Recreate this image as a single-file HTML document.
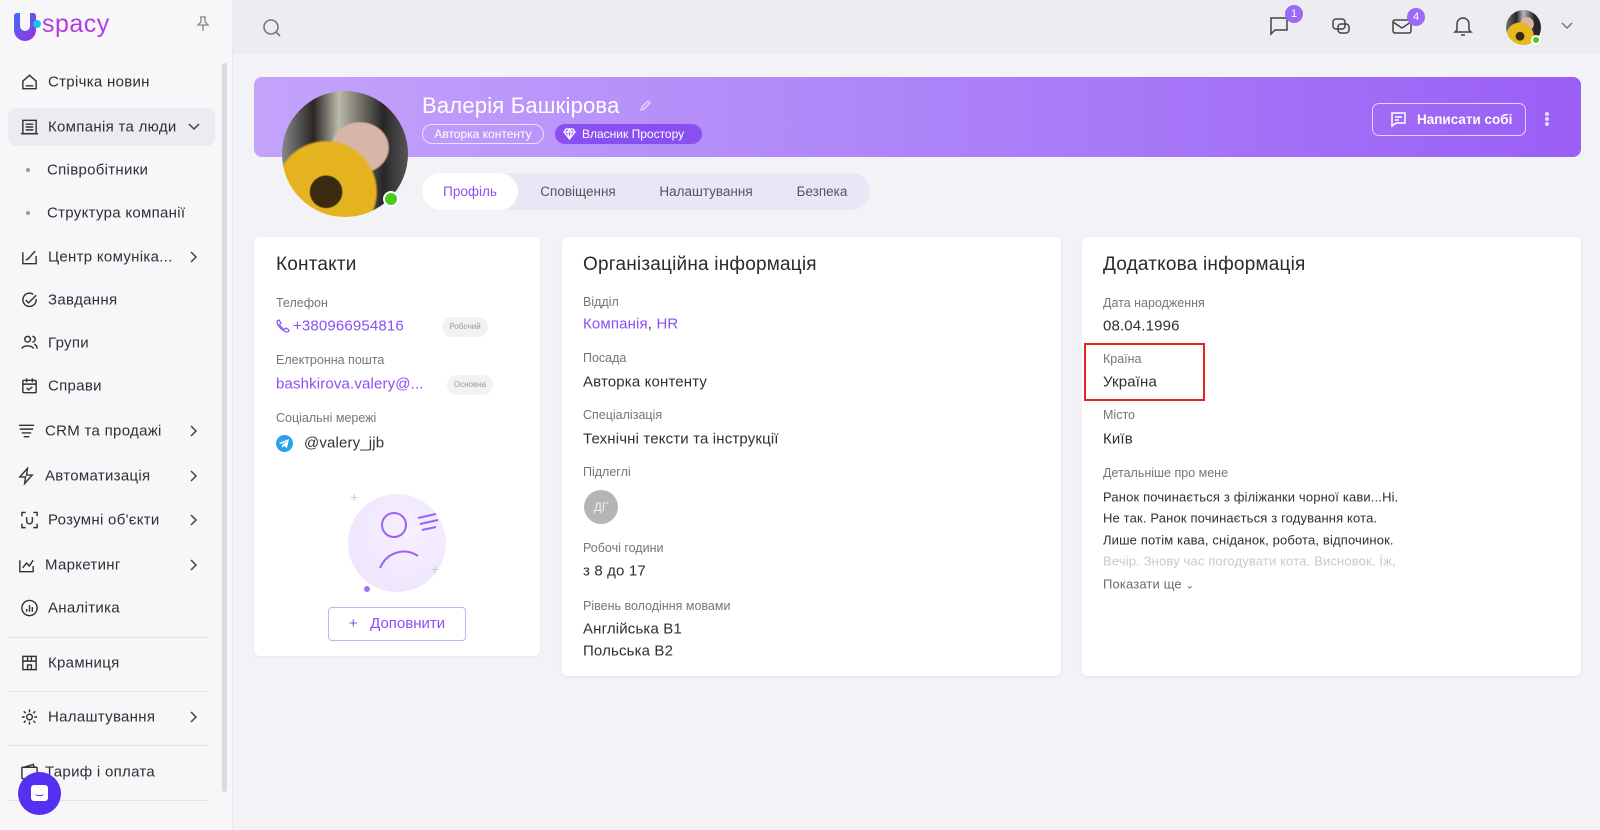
<!DOCTYPE html>
<html><head><meta charset="utf-8"><style>
*{box-sizing:border-box;margin:0;padding:0}
body{width:1600px;height:830px;overflow:hidden;background:#f3f3f7;font-family:"Liberation Sans","Noto Sans CJK SC",sans-serif;color:#2e2e33;position:relative}
.a{position:absolute}
.side{left:0;top:0;width:233px;height:830px;background:#f7f7f9;border-right:1px solid #e8e8ee}
.nav{position:absolute;left:48px;font-size:15px;color:#2f2f35;letter-spacing:.3px;transform:translateY(-50%)}
.ic{position:absolute;left:20px;width:19px;height:19px;transform:translateY(-50%)}
.chev{position:absolute;left:188px;transform:translateY(-50%)}
.div{position:absolute;left:8px;width:201px;height:1px;background:#e3e3e8}
.top{left:233px;top:0;width:1367px;height:54px;background:#ececf1}
.card{background:#fff;border-radius:6px;box-shadow:0 1px 3px rgba(0,0,0,.05)}
.t{position:absolute;font-size:19px;color:#2a2a2f;letter-spacing:.2px}
.l{position:absolute;font-size:12.5px;color:#75757c;transform:translateY(-50%)}
.v{position:absolute;font-size:15px;color:#2f2f35;transform:translateY(-50%);white-space:nowrap;letter-spacing:.15px}
.p{color:#8a4ff7}
.badge{position:absolute;width:18px;height:18px;border-radius:50%;background:#9b6af6;color:#fff;font-size:11px;text-align:center;line-height:18px}
</style></head><body>

<div class="a side">
  <div class="a" style="left:14px;top:13px;width:22px;height:28px;border-radius:3px 3px 12px 12px;background:linear-gradient(135deg,#3a6ff5,#a12ee0)"></div>
  <div class="a" style="left:20px;top:13px;width:10px;height:18px;border-radius:0 0 5px 5px;background:#f7f7f9"></div>
  <div class="a" style="left:33px;top:20px;width:8px;height:8px;border-radius:50%;background:#20c0f0"></div>
  <div class="a" style="left:42px;top:10px;font-size:25px;color:#b33be4;letter-spacing:.5px">spacy</div>
  <svg class="a" style="left:196px;top:16px" width="14" height="16" viewBox="0 0 14 16" fill="none" stroke="#888" stroke-width="1.3"><path d="M4 1h6M5 1v5L2 9h10L9 6V1M7 9v6"/></svg>
  <div class="a" style="left:222px;top:63px;width:5px;height:729px;background:#d9d9de;border-radius:3px"></div>
  <div class="a" style="left:8px;top:108px;width:207px;height:38px;background:#ebebf0;border-radius:8px"></div>

  <svg class="ic" style="top:82px" viewBox="0 0 20 20" fill="none" stroke="#333" stroke-width="1.5"><path d="M3 9l7-6 7 6v8H3z M6 14h8"/></svg>
  <div class="nav" style="top:82px">Стрічка новин</div>
  <svg class="ic" style="top:127px" viewBox="0 0 20 20" fill="none" stroke="#333" stroke-width="1.5"><rect x="3" y="3" width="14" height="14"/><path d="M6 7h8M6 10h8M6 13h8M1 17h18"/></svg>
  <div class="nav" style="top:127px">Компанія та люди</div>
  <svg class="chev" style="top:127px" width="12" height="8" viewBox="0 0 12 8" fill="none" stroke="#444" stroke-width="1.5"><path d="M1 1l5 5 5-5"/></svg>
  <div class="a" style="left:26px;top:168px;width:4px;height:4px;border-radius:50%;background:#999"></div>
  <div class="nav" style="top:170px;left:47px">Співробітники</div>
  <div class="a" style="left:26px;top:211px;width:4px;height:4px;border-radius:50%;background:#999"></div>
  <div class="nav" style="top:213px;left:47px">Структура компанії</div>
  <svg class="ic" style="top:257px" viewBox="0 0 20 20" fill="none" stroke="#333" stroke-width="1.5"><path d="M3 5v12h14V9M6 13c3 0 4-3 7-6l3-3"/></svg>
  <div class="nav" style="top:257px">Центр комуніка...</div>
  <svg class="chev" style="top:257px;left:190px" width="8" height="12" viewBox="0 0 8 12" fill="none" stroke="#444" stroke-width="1.5"><path d="M1 1l5 5-5 5"/></svg>
  <svg class="ic" style="top:300px" viewBox="0 0 20 20" fill="none" stroke="#333" stroke-width="1.5"><path d="M17 9a7 7 0 1 1-3-5M6 10l3 3 8-8"/></svg>
  <div class="nav" style="top:300px">Завдання</div>
  <svg class="ic" style="top:343px" viewBox="0 0 20 20" fill="none" stroke="#333" stroke-width="1.5"><circle cx="8" cy="6" r="3"/><path d="M2 16c1-4 11-4 12 0M13 3a3 3 0 0 1 0 6M15 11c2 1 3 3 3 5"/></svg>
  <div class="nav" style="top:343px">Групи</div>
  <svg class="ic" style="top:386px" viewBox="0 0 20 20" fill="none" stroke="#333" stroke-width="1.5"><rect x="3" y="4" width="14" height="13" rx="1"/><path d="M3 8h14M7 2v4M13 2v4M7 12l2 2 4-3"/></svg>
  <div class="nav" style="top:386px">Справи</div>
  <svg class="ic" style="top:431px;left:17px" viewBox="0 0 20 20" fill="none" stroke="#333" stroke-width="1.5"><path d="M2 4h16M3 8h14M5 12h10M7 16h6"/></svg>
  <div class="nav" style="top:431px;left:45px">CRM та продажі</div>
  <svg class="chev" style="top:431px;left:190px" width="8" height="12" viewBox="0 0 8 12" fill="none" stroke="#444" stroke-width="1.5"><path d="M1 1l5 5-5 5"/></svg>
  <svg class="ic" style="top:476px;left:17px" viewBox="0 0 20 20" fill="none" stroke="#333" stroke-width="1.5"><path d="M11 2L3 11h6l-1 7 8-9h-6z"/></svg>
  <div class="nav" style="top:476px;left:45px">Автоматизація</div>
  <svg class="chev" style="top:476px;left:190px" width="8" height="12" viewBox="0 0 8 12" fill="none" stroke="#444" stroke-width="1.5"><path d="M1 1l5 5-5 5"/></svg>
  <svg class="ic" style="top:520px" viewBox="0 0 20 20" fill="none" stroke="#333" stroke-width="1.5"><path d="M2 6V2h4M14 2h4v4M18 14v4h-4M6 18H2v-4M7 7v4a3 3 0 0 0 6 0V7"/></svg>
  <div class="nav" style="top:520px">Розумні об'єкти</div>
  <svg class="chev" style="top:520px;left:190px" width="8" height="12" viewBox="0 0 8 12" fill="none" stroke="#444" stroke-width="1.5"><path d="M1 1l5 5-5 5"/></svg>
  <svg class="ic" style="top:565px;left:17px" viewBox="0 0 20 20" fill="none" stroke="#333" stroke-width="1.5"><path d="M3 5v12h14V11M6 13l4-5 3 3 4-6"/></svg>
  <div class="nav" style="top:565px;left:45px">Маркетинг</div>
  <svg class="chev" style="top:565px;left:190px" width="8" height="12" viewBox="0 0 8 12" fill="none" stroke="#444" stroke-width="1.5"><path d="M1 1l5 5-5 5"/></svg>
  <svg class="ic" style="top:608px" viewBox="0 0 20 20" fill="none" stroke="#333" stroke-width="1.5"><circle cx="10" cy="10" r="8"/><path d="M7 14v-3M10 14V7M13 14v-5"/></svg>
  <div class="nav" style="top:608px">Аналітика</div>
  <div class="div" style="top:637px"></div>
  <svg class="ic" style="top:663px" viewBox="0 0 20 20" fill="none" stroke="#333" stroke-width="1.5"><rect x="3" y="3" width="14" height="14"/><path d="M3 8h14M8 17v-5h4v5M8 3v5M12 3v5"/></svg>
  <div class="nav" style="top:663px">Крамниця</div>
  <div class="div" style="top:691px"></div>
  <svg class="ic" style="top:717px" viewBox="0 0 20 20" fill="none" stroke="#333" stroke-width="1.5"><circle cx="10" cy="10" r="3"/><path d="M10 2v3M10 15v3M2 10h3M15 10h3M4 4l2 2M14 14l2 2M4 16l2-2M14 6l2-2"/></svg>
  <div class="nav" style="top:717px">Налаштування</div>
  <svg class="chev" style="top:717px;left:190px" width="8" height="12" viewBox="0 0 8 12" fill="none" stroke="#444" stroke-width="1.5"><path d="M1 1l5 5-5 5"/></svg>
  <div class="div" style="top:745px"></div>
  <svg class="ic" style="top:772px" viewBox="0 0 20 20" fill="none" stroke="#333" stroke-width="1.5"><rect x="2" y="5" width="16" height="12" rx="1"/><path d="M4 5l10-3 1 3"/></svg>
  <div class="nav" style="top:772px;left:45px">Тариф і оплата</div>
  <div class="div" style="top:800px"></div>
  <div class="a" style="left:18px;top:772px;width:43px;height:43px;border-radius:50%;background:#5530f0"></div>
  <div class="a" style="left:31px;top:785px;width:17px;height:16px;border-radius:3px;background:#fff"></div>
  <div class="a" style="left:35px;top:793px;width:9px;height:3px;border-bottom:1.5px solid #5530f0;border-radius:0 0 5px 5px"></div>
</div>

<div class="a top"></div>
<svg class="a" style="left:262px;top:18px" width="20" height="20" viewBox="0 0 20 20" fill="none" stroke="#777" stroke-width="1.6"><circle cx="9" cy="9" r="7"/><path d="M14 14l4 4"/></svg>
<svg class="a" style="left:1269px;top:16px" width="20" height="20" viewBox="0 0 20 20" fill="none" stroke="#444" stroke-width="1.5"><path d="M2 2h16v12H6l-4 4z"/></svg>
<div class="badge" style="left:1285px;top:5px">1</div>
<svg class="a" style="left:1331px;top:17px" width="20" height="20" viewBox="0 0 20 20" fill="none" stroke="#444" stroke-width="1.5"><rect x="2" y="2" width="12" height="10" rx="3"/><rect x="7" y="7" width="11" height="9" rx="3"/></svg>
<svg class="a" style="left:1392px;top:18px" width="20" height="18" viewBox="0 0 20 18" fill="none" stroke="#444" stroke-width="1.5"><rect x="1" y="2" width="18" height="13" rx="2"/><path d="M1 4l9 6 9-6"/></svg>
<div class="badge" style="left:1407px;top:8px">4</div>
<svg class="a" style="left:1453px;top:15px" width="20" height="22" viewBox="0 0 20 22" fill="none" stroke="#444" stroke-width="1.5"><path d="M4 15V9a6 6 0 0 1 12 0v6l2 2H2zM8 20h4"/></svg>
<div class="a" style="left:1506px;top:10px;width:35px;height:35px;border-radius:50%;background:radial-gradient(circle at 40% 75%,#3a2a10 0 12%,#e9b820 14% 40%,transparent 42%),radial-gradient(ellipse at 60% 40%,#d7b6a8 0 22%,transparent 24%),linear-gradient(90deg,#777,#2a2626 30%,#bbb 50%,#2a2626 80%)"></div>
<div class="a" style="left:1531px;top:35px;width:10px;height:10px;border-radius:50%;background:#4cc91d;border:2px solid #fff"></div>
<svg class="a" style="left:1561px;top:22px" width="12" height="8" viewBox="0 0 12 8" fill="none" stroke="#777" stroke-width="1.5"><path d="M1 1l5 5 5-5"/></svg>

<div class="a" style="left:254px;top:77px;width:1327px;height:80px;border-radius:8px;background:linear-gradient(90deg,#c4a3fb,#ad84f8 50%,#9a5ff6)"></div>
<div class="a" style="left:282px;top:91px;width:126px;height:126px;border-radius:50%;background:radial-gradient(circle at 35% 80%,#3a2a10 0 12%,#e5b31f 13% 38%,transparent 40%),radial-gradient(ellipse at 62% 45%,#d7b6a8 0 25%,transparent 27%),linear-gradient(90deg,#888 0,#2a2626 25%,#bba 45%,#2a2626 80%,#555)"></div>
<div class="a" style="left:383px;top:191px;width:16px;height:16px;border-radius:50%;background:#4cc91d;border:2px solid #fff"></div>
<div class="a" style="left:422px;top:93px;font-size:22px;color:#fff;letter-spacing:.2px">Валерія Башкірова</div>
<svg class="a" style="left:639px;top:100px" width="12" height="12" viewBox="0 0 12 12" fill="none" stroke="#e6d8ff" stroke-width="1.3"><path d="M2 10l1-3 6-6 2 2-6 6z"/></svg>
<div class="a" style="left:422px;top:124px;width:122px;height:20px;border:1px solid #ecdfff;border-radius:10px;color:#fff;font-size:12px;text-align:center;line-height:18px">Авторка контенту</div>
<div class="a" style="left:555px;top:124px;width:147px;height:20px;background:#8a4ff1;border-radius:10px;color:#fff;font-size:12px;line-height:20px;padding-left:27px">Власник Простору</div>
<svg class="a" style="left:563px;top:128px" width="13" height="12" viewBox="0 0 13 12" fill="none" stroke="#fff" stroke-width="1.3"><path d="M1 4l2-3h7l2 3-5.5 7zM1 4h11M6.5 11L4.5 4 6.5 1 8.5 4z"/></svg>
<div class="a" style="left:1372px;top:103px;width:154px;height:33px;border:1px solid #e2d2ff;border-radius:7px;color:#fff;font-size:13.5px;font-weight:bold;line-height:31px;padding-left:44px">Написати собі</div>
<svg class="a" style="left:1390px;top:111px" width="17" height="17" viewBox="0 0 17 17" fill="none" stroke="#fff" stroke-width="1.5"><path d="M2 2h13v10H6l-4 3zM5 6h7M5 9h4"/></svg>
<div class="a" style="left:1545px;top:112px;width:4px;height:4px;border-radius:50%;background:#e8dcff;box-shadow:0 5px 0 #e8dcff,0 10px 0 #e8dcff"></div>

<div class="a" style="left:422px;top:173px;width:448px;height:37px;border-radius:19px;background:#ebe6f6"></div>
<div class="a" style="left:422px;top:173px;width:96px;height:37px;border-radius:19px;background:#fff"></div>
<div class="a" style="left:422px;top:184px;width:96px;text-align:center;font-size:13.5px;color:#8a4ff7">Профіль</div>
<div class="a" style="left:528px;top:184px;width:100px;text-align:center;font-size:13.5px;color:#555">Сповіщення</div>
<div class="a" style="left:646px;top:184px;width:120px;text-align:center;font-size:13.5px;color:#555">Налаштування</div>
<div class="a" style="left:782px;top:184px;width:80px;text-align:center;font-size:13.5px;color:#555">Безпека</div>

<div class="a card" style="left:254px;top:237px;width:286px;height:419px">
  <div class="t" style="left:22px;top:17px">Контакти</div>
  <div class="l" style="left:22px;top:66px">Телефон</div>
  <svg class="a" style="left:22px;top:82px" width="14" height="14" viewBox="0 0 14 14" fill="none" stroke="#8a4ff7" stroke-width="1.2"><path d="M3 1l2 3-1.5 1.5c1 2 3 4 5 5L10 9l3 2-1 2C7 13 1 7 1 2z"/></svg>
  <div class="v p" style="left:39px;top:89px">+380966954816</div>
  <div class="a" style="left:188px;top:80px;width:46px;height:20px;border-radius:10px;background:#f2f2f5;font-size:8px;color:#999;text-align:center;line-height:20px">Робочий</div>
  <div class="l" style="left:22px;top:123px">Електронна пошта</div>
  <div class="v p" style="left:22px;top:147px">bashkirova.valery@...</div>
  <div class="a" style="left:193px;top:138px;width:46px;height:20px;border-radius:10px;background:#f2f2f5;font-size:8px;color:#999;text-align:center;line-height:20px">Основна</div>
  <div class="l" style="left:22px;top:181px">Соціальні мережі</div>
  <div class="a" style="left:22px;top:198px;width:17px;height:17px;border-radius:50%;background:#2aa3ea"></div>
  <svg class="a" style="left:25px;top:202px" width="11" height="9" viewBox="0 0 11 9" fill="#fff"><path d="M0 4l10-4-2 9-3-2-2 2V6l5-4-6 3z"/></svg>
  <div class="v" style="left:50px;top:206px;color:#333">@valery_jjb</div>
  <div class="a" style="left:94px;top:257px;width:98px;height:98px;border-radius:50%;background:radial-gradient(circle at 60% 40%,#f6f0ff,#ede2fd)"></div>
  <div class="a" style="left:96px;top:252px;color:#ccc;font-size:14px">+</div>
  <div class="a" style="left:177px;top:324px;color:#ccc;font-size:14px">+</div>
  <div class="a" style="left:110px;top:349px;width:6px;height:6px;border-radius:50%;background:#a574f5"></div>
  <svg class="a" style="left:118px;top:275px" width="80" height="65" viewBox="0 0 80 65" fill="none" stroke="#9a63f5" stroke-width="2"><circle cx="22" cy="13" r="12"/><path d="M8 56c7-16 25-21 38-12M46 6l18-4M48 12l18-4M50 18l14-3"/></svg>
  <div class="a" style="left:74px;top:370px;width:138px;height:34px;border:1px solid #c8aefa;border-radius:4px;color:#8a4ff7;font-size:15px;text-align:center;line-height:32px">+&nbsp;&nbsp;&nbsp;Доповнити</div>
</div>

<div class="a card" style="left:562px;top:237px;width:499px;height:439px">
  <div class="t" style="left:21px;top:17px">Організаційна інформація</div>
  <div class="l" style="left:21px;top:65px">Відділ</div>
  <div class="v p" style="left:21px;top:87px">Компанія<span style="color:#333">,</span> HR</div>
  <div class="l" style="left:21px;top:121px">Посада</div>
  <div class="v" style="left:21px;top:145px">Авторка контенту</div>
  <div class="l" style="left:21px;top:178px">Спеціалізація</div>
  <div class="v" style="left:21px;top:202px">Технічні тексти та інструкції</div>
  <div class="l" style="left:21px;top:235px">Підлеглі</div>
  <div class="a" style="left:22px;top:253px;width:34px;height:34px;border-radius:50%;background:#b5b5b8;color:#eee;font-size:12px;text-align:center;line-height:34px">ДГ</div>
  <div class="l" style="left:21px;top:311px">Робочі години</div>
  <div class="v" style="left:21px;top:334px">з 8 до 17</div>
  <div class="l" style="left:21px;top:369px">Рівень володіння мовами</div>
  <div class="v" style="left:21px;top:392px">Англійська B1</div>
  <div class="v" style="left:21px;top:414px">Польська B2</div>
</div>

<div class="a card" style="left:1082px;top:237px;width:499px;height:439px">
  <div class="t" style="left:21px;top:17px">Додаткова інформація</div>
  <div class="l" style="left:21px;top:66px">Дата народження</div>
  <div class="v" style="left:21px;top:89px">08.04.1996</div>
  <div class="l" style="left:21px;top:122px">Країна</div>
  <div class="v" style="left:21px;top:145px">Україна</div>
  <div class="a" style="left:2px;top:106px;width:121px;height:58px;border:2px solid #e8231e"></div>
  <div class="l" style="left:21px;top:178px">Місто</div>
  <div class="v" style="left:21px;top:202px">Київ</div>
  <div class="l" style="left:21px;top:236px">Детальніше про мене</div>
  <div class="v" style="left:21px;top:260px;font-size:13px">Ранок починається з філіжанки чорної кави...Ні.</div>
  <div class="v" style="left:21px;top:281px;font-size:13px">Не так. Ранок починається з годування кота.</div>
  <div class="v" style="left:21px;top:303px;font-size:13px">Лише потім кава, сніданок, робота, відпочинок.</div>
  <div class="v" style="left:21px;top:324px;font-size:13px;color:#c9c9ce">Вечір. Знову час погодувати кота. Висновок. Їж,</div>
  <div class="v" style="left:21px;top:347px;font-size:13px;color:#6a6a70">Показати ще <span style="font-size:10px">&#8964;</span></div>
</div>
</body></html>
